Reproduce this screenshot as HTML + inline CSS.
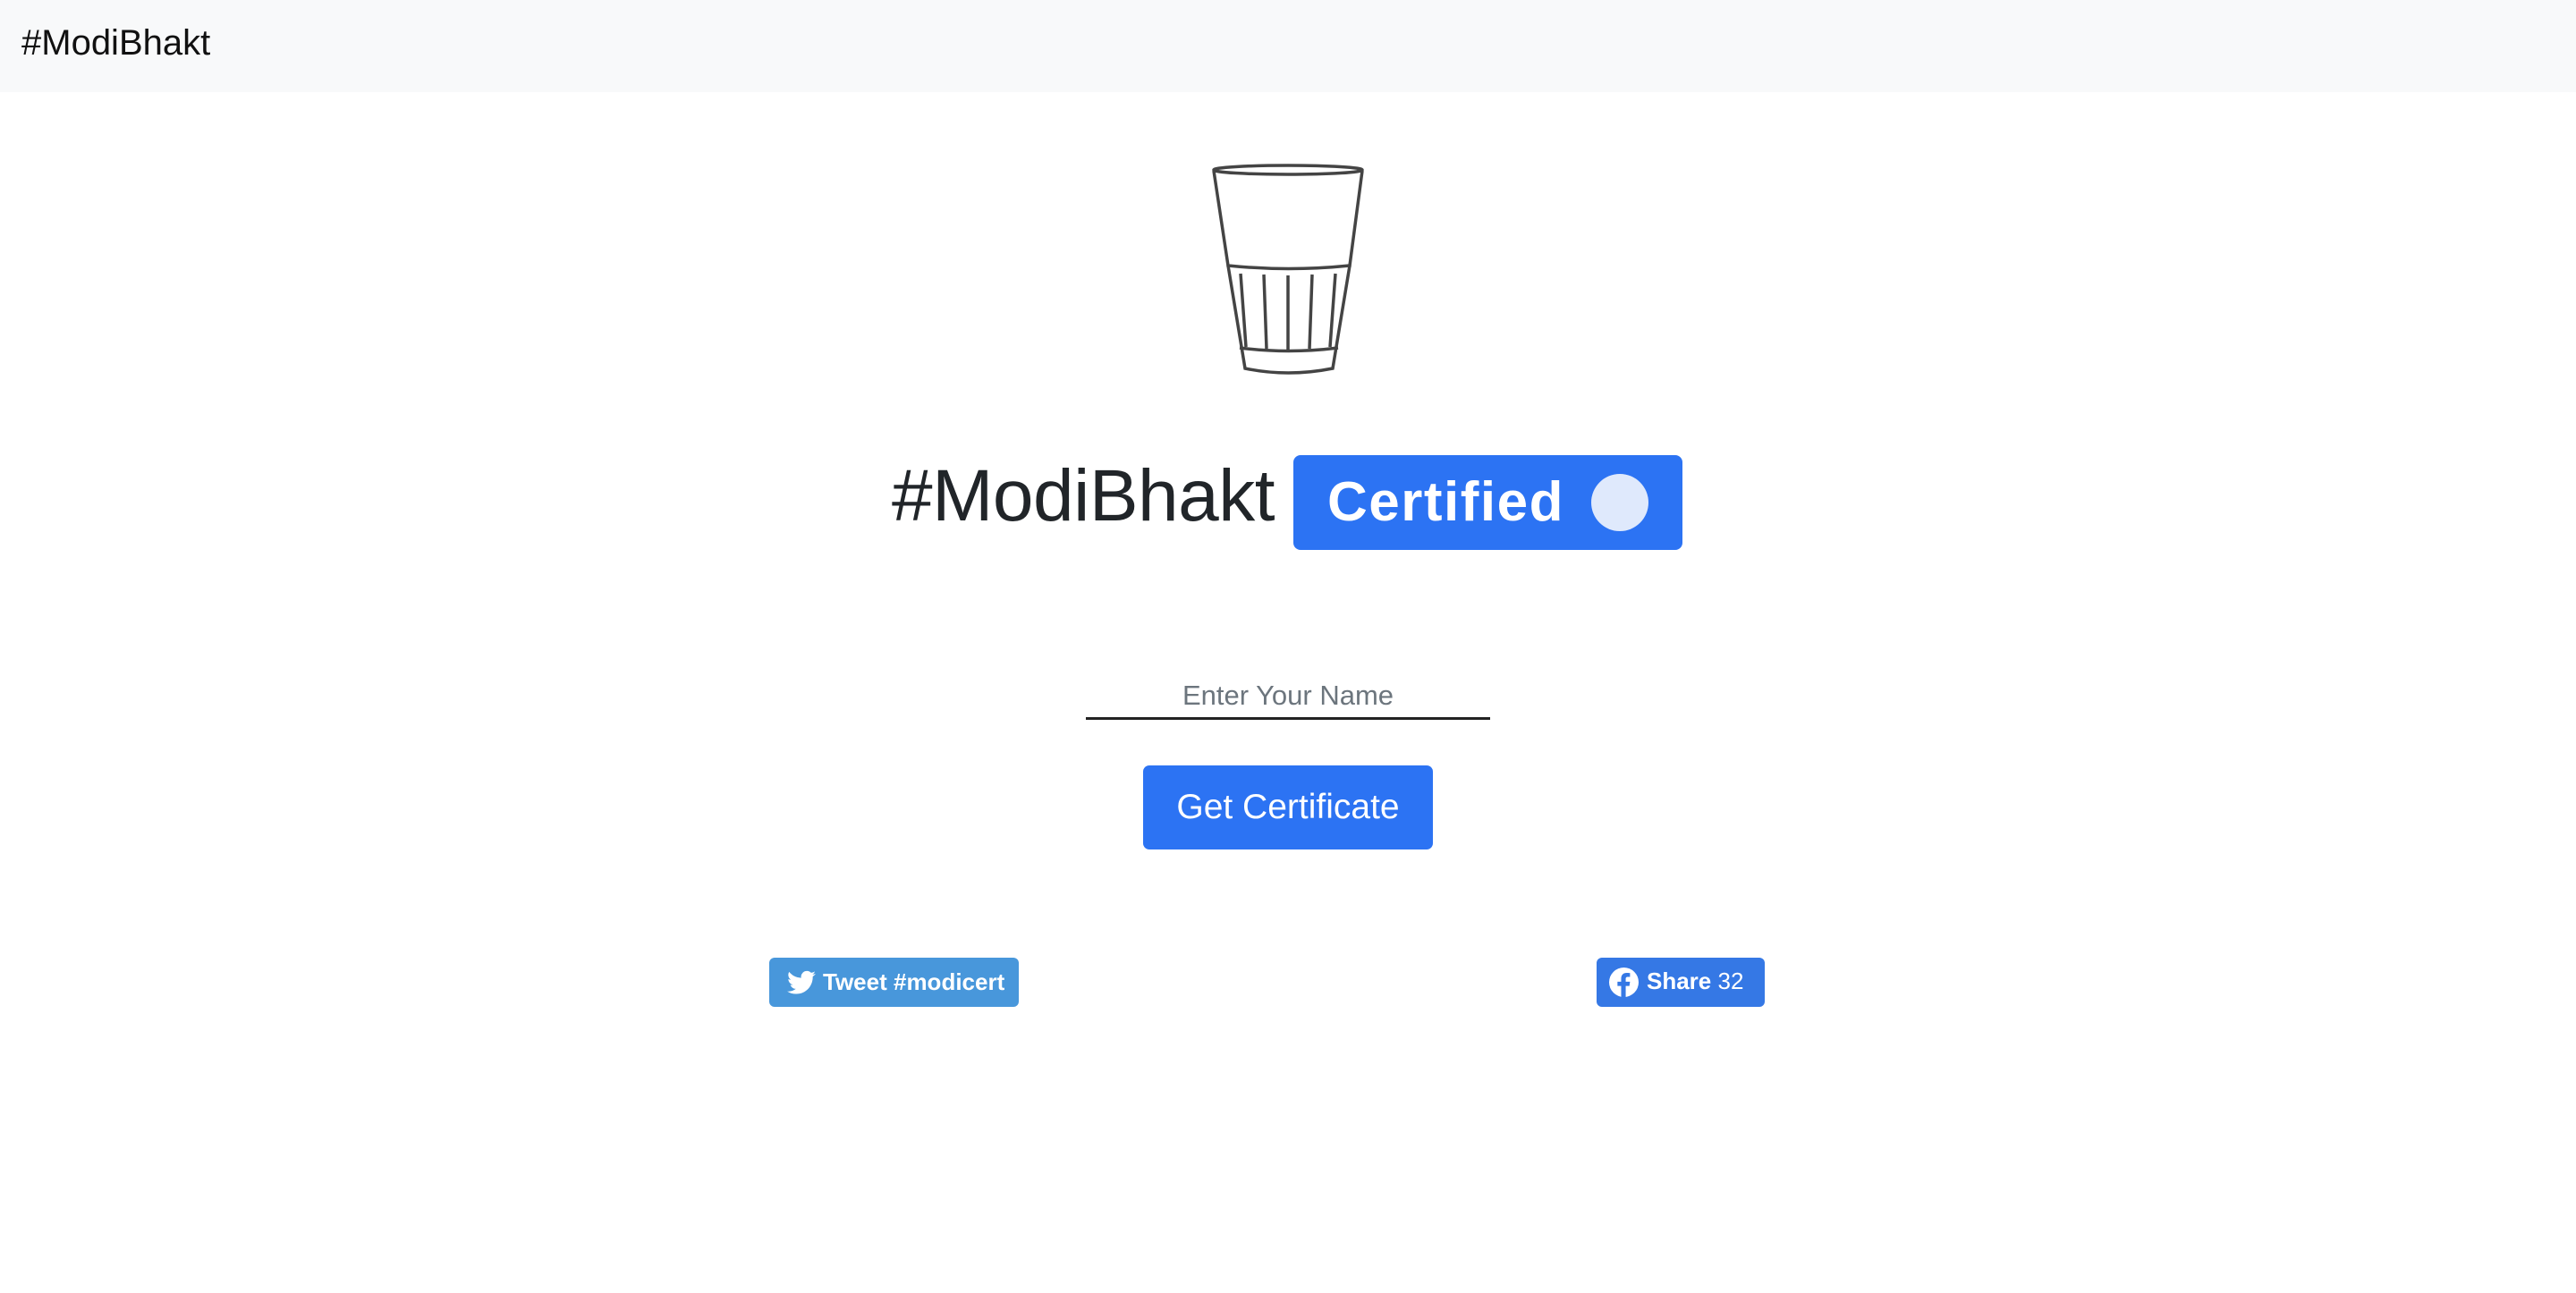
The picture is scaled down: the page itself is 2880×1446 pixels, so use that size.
<!DOCTYPE html>
<html><head><meta charset="utf-8"><style>
*{margin:0;padding:0;box-sizing:border-box}
body{width:2880px;height:1446px;background:#fff;font-family:"Liberation Sans",Arial,sans-serif;position:relative;overflow:hidden}
.nav{position:absolute;left:0;top:0;width:2880px;height:103px;background:#f8f9fa}
.brand{position:absolute;left:24px;top:26px;font-size:40px;color:#111;line-height:44px}
.abs{position:absolute}
h1{position:absolute;left:997px;top:505px;font-size:82px;font-weight:400;color:#212529;line-height:100px;letter-spacing:-0.5px}
.badge{position:absolute;left:1446px;top:509px;width:435px;height:106px;background:#2c73f3;border-radius:8px}
.badge span{position:absolute;left:38px;top:18px;font-size:62px;font-weight:700;color:#fff;line-height:70px;letter-spacing:1.5px}
.circ{position:absolute;left:1779px;top:530px;width:64px;height:64px;border-radius:50%;background:#dfe9fc}
.ph{position:absolute;left:1214px;top:758px;width:452px;text-align:center;font-size:31px;color:#6c757d;line-height:40px}
.line{position:absolute;left:1214px;top:802px;width:452px;height:3px;background:#222}
.btn{position:absolute;left:1278px;top:856px;width:324px;height:94px;background:#2c73f3;border-radius:7px;color:#fff;font-size:39px;text-align:center;line-height:94px}
.tw{position:absolute;left:860px;top:1071px;width:279px;height:55px;background:#4897db;border-radius:6px;color:#fff;font-weight:700;font-size:26px;line-height:55px}
.fb{position:absolute;left:1785px;top:1071px;width:188px;height:55px;background:#3578e5;border-radius:6px;color:#fff;font-weight:700;font-size:26px;line-height:52px}
</style></head><body>
<div class="nav"><div class="brand">#ModiBhakt</div></div>
<svg class="abs" style="left:1340px;top:180px" width="200" height="245" viewBox="0 0 200 245" fill="none" stroke="#444" stroke-width="3.5">
<ellipse cx="100" cy="10" rx="83" ry="5"/>
<path d="M17 11 L33 117 Q100 124 169 117 L183 11"/>
<path d="M33 117 L52 232 Q100 242 150 232 L169 117"/>
<path d="M46 209 Q100 216 156 209"/>
<path d="M47 126 L53 208 M73 127 L76 210 M100 128 L100 211 M127 127 L124 210 M153 126 L147 208"/>
</svg>
<h1>#ModiBhakt</h1>
<div class="badge"><span>Certified</span></div>
<div class="circ"></div>
<div class="ph">Enter Your Name</div>
<div class="line"></div>
<div class="btn">Get Certificate</div>
<div class="tw"><svg class="abs" style="left:20px;top:14px" width="32" height="28" viewBox="0 0 24 20"><path fill="#fff" d="M24 2.4a10 10 0 0 1-2.8.8A4.9 4.9 0 0 0 23.300.5a9.8 9.8 0 0 1-3.1 1.2A4.9 4.9 0 0 0 11.8 6 14 14 0 0 1 1.7.9a4.9 4.9 0 0 0 1.5 6.6A4.9 4.9 0 0 1 1 6.9a4.9 4.9 0 0 0 3.9 4.8 4.9 4.9 0 0 1-2.2.1 4.9 4.9 0 0 0 4.6 3.4A9.9 9.9 0 0 1 0 17.2 14 14 0 0 0 7.5 19.4c9.1 0 14-7.5 14-14v-.6A10 10 0 0 0 24 2.4z"/></svg><span style="position:absolute;left:60px">Tweet #modicert</span></div>
<div class="fb"><svg class="abs" style="left:14px;top:11px" width="33" height="33" viewBox="0 0 24 24"><circle cx="12" cy="12" r="12" fill="#fff"/><path fill="#3578e5" d="M13.5 24v-9h3l.5-3.5h-3.5V9.3c0-1 .3-1.700 1.8-1.7H17V4.5c-.3 0-1.4-.1-2.7-.1-2.7 0-4.5 1.6-4.5 4.6v2.5h-3V15h3v9z"/></svg><span style="position:absolute;left:56px">Share <span style="font-weight:400">32</span></span></div>
</body></html>
